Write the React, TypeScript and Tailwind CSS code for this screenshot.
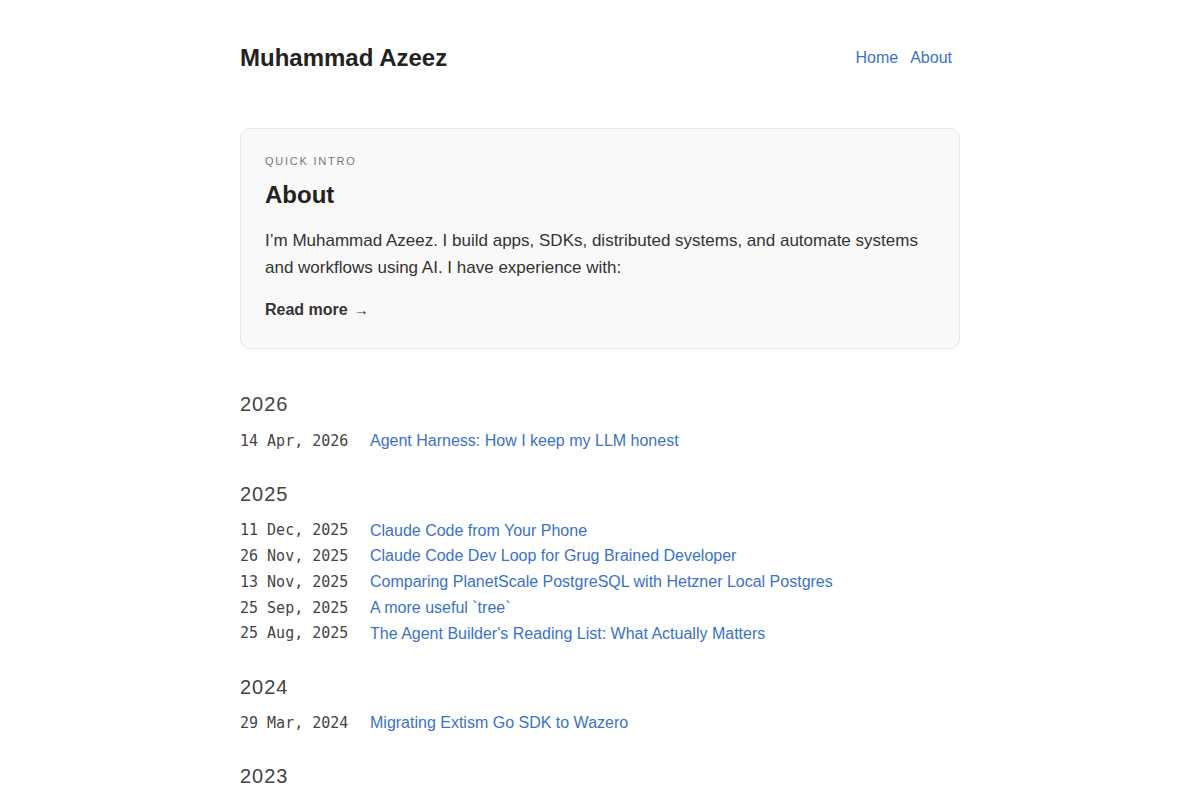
import React from "react";

interface Post {
  date: string;
  title: string;
}

const archive: { year: string; posts: Post[] }[] = [
  { year: "2026", posts: [{ date: "14 Apr, 2026", title: "Agent Harness: How I keep my LLM honest" }] },
  {
    year: "2025",
    posts: [
      { date: "11 Dec, 2025", title: "Claude Code from Your Phone" },
      { date: "26 Nov, 2025", title: "Claude Code Dev Loop for Grug Brained Developer" },
      { date: "13 Nov, 2025", title: "Comparing PlanetScale PostgreSQL with Hetzner Local Postgres" },
      { date: "25 Sep, 2025", title: "A more useful `tree`" },
      { date: "25 Aug, 2025", title: "The Agent Builder's Reading List: What Actually Matters" },
    ],
  },
  { year: "2024", posts: [{ date: "29 Mar, 2024", title: "Migrating Extism Go SDK to Wazero" }] },
  { year: "2023", posts: [] },
];

export default function App() {
  return (
    <div className="h-screen overflow-hidden bg-white font-['Liberation_Sans',Arial,sans-serif] text-[#222]">
      <div className="mx-auto w-[720px] pt-[42px]">
        {/* header */}
        <header className="flex items-center justify-between">
          <h1 className="text-[24px] font-bold leading-[32px] text-[#222]">Muhammad Azeez</h1>
          <nav className="flex gap-3 pr-2 text-[16px] text-[#3a72c9]">
            <a href="#">Home</a>
            <a href="#">About</a>
          </nav>
        </header>

        {/* intro card */}
        <section className="mt-[54px] rounded-[10px] border border-[#e6e6e6] bg-[#f9f9f9] px-6 pt-[25px] pb-[26px]">
          <div className="text-[11px] uppercase leading-[14px] tracking-[0.16em] text-[#777]">
            Quick intro
          </div>
          <h2 className="mt-[13px] text-[24px] font-bold leading-[28px] text-[#222]">About</h2>
          <p className="mt-[18px] text-[17px] leading-[27px] text-[#333]">
            I’m Muhammad Azeez. I build apps, SDKs, distributed systems, and automate systems and workflows using AI. I have experience with:
          </p>
          <a href="#" className="mt-[19px] inline-flex items-center gap-[6px] text-[16px] font-bold leading-[20px] text-[#333]">
            Read more <span className="text-[15px] font-normal">→</span>
          </a>
        </section>

        {/* posts by year */}
        <main className="mt-[41px]">
          {archive.map((group) => (
            <section key={group.year} className="mb-[26px]">
              <h3 className="text-[20px] leading-[28px] tracking-[1px] text-[#444]">{group.year}</h3>
              <ul className="mt-[10px]">
                {group.posts.map((p) => (
                  <li key={p.title} className="flex h-[25.75px] items-center">
                    <span className="w-[130px] shrink-0 text-[15px] text-[#444] font-['DejaVu_Sans_Mono',monospace]">
                      {p.date}
                    </span>
                    <a href="#" className="text-[16px] text-[#3a72c9]">
                      {p.title}
                    </a>
                  </li>
                ))}
              </ul>
            </section>
          ))}
        </main>
      </div>
    </div>
  );
}
